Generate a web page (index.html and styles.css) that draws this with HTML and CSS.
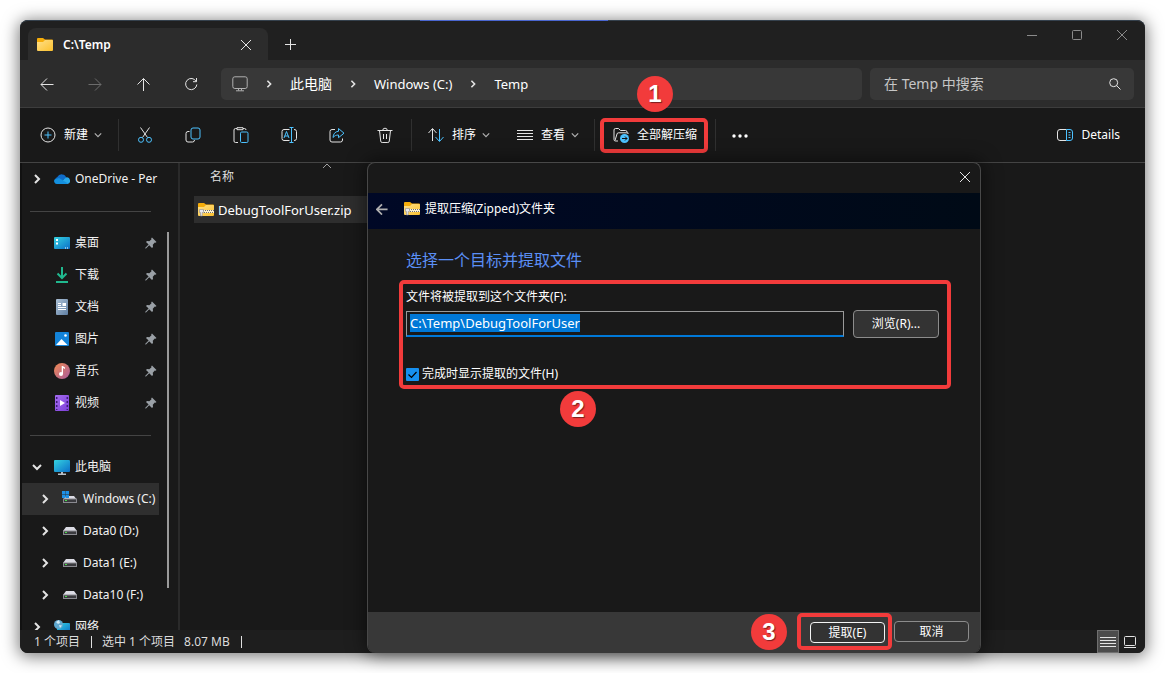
FILE: index.html
```html
<!DOCTYPE html>
<html lang="zh-CN">
<head>
<meta charset="utf-8">
<title>C:\Temp</title>
<link rel="stylesheet" href="styles.css">
</head>
<body>
<svg class="defs" aria-hidden="true">
  <defs>
    <linearGradient id="g-folder" x1="0" y1="0" x2="1" y2="1"><stop offset="0" stop-color="#ffe08a"/><stop offset="1" stop-color="#fbc02d"/></linearGradient>
    <linearGradient id="g-screen" x1="0" y1="0" x2="1" y2="1"><stop offset="0" stop-color="#35d3e0"/><stop offset="1" stop-color="#0b6fc9"/></linearGradient>
    <linearGradient id="g-doc" x1="0" y1="0" x2="1" y2="1"><stop offset="0" stop-color="#adc1d6"/><stop offset="1" stop-color="#5f7fa3"/></linearGradient>
    <linearGradient id="g-music" x1="0" y1="0" x2="1" y2="1"><stop offset="0" stop-color="#f08a52"/><stop offset="1" stop-color="#a85a9c"/></linearGradient>
    <linearGradient id="g-video" x1="0" y1="0" x2="1" y2="1"><stop offset="0" stop-color="#a56cf0"/><stop offset="1" stop-color="#7c3fd8"/></linearGradient>
  </defs>
  <symbol id="i-folder" viewBox="0 0 16 16"><path fill="#f5ac0a" d="M0 2a1 1 0 0 1 1-1h5l2 1.500h7a1 1 0 0 1 1 1v3H0z"/><path fill="url(#g-folder)" d="M0 5h6l2-2h7a1 1 0 0 1 1 1v9a1 1 0 0 1-1 1H1a1 1 0 0 1-1-1z"/></symbol>
  <symbol id="i-zip" viewBox="0 0 16 16"><path fill="#f5ac0a" d="M0 2a1 1 0 0 1 1-1h5l2 1.500h7a1 1 0 0 1 1 1v3H0z"/><path fill="url(#g-folder)" d="M0 5h6l2-2h7a1 1 0 0 1 1 1v9a1 1 0 0 1-1 1H1a1 1 0 0 1-1-1z"/><path stroke="#fff4cf" stroke-width="3" d="M5 9.500h11"/><path stroke="#6f6f78" stroke-dasharray="1 1" d="M5 8.500h11M6 10.500h10"/><path fill="#e8e8ee" stroke="#8d8d96" stroke-width=".6" d="M1.500 7.500h4v3h-1.300v3.500H2.500v-3.500h-1z"/></symbol>
  <symbol id="i-right" viewBox="0 0 10 10"><path d="M3 1l4 4-4 4"/></symbol>
  <symbol id="i-down" viewBox="0 0 10 10"><path d="M1 3l4 4 4-4"/></symbol>
  <symbol id="i-close" viewBox="0 0 10 10"><path d="M0 0l10 10M10 0L0 10"/></symbol>
  <symbol id="i-back" viewBox="0 0 14 14"><path d="M13.500 7.500H1M7 1.500l-6 6 6 6"/></symbol>
  <symbol id="i-pin" viewBox="0 0 12 12"><path fill="#9aa0a6" d="M7 .5L11.500 5l-1 .8-.7-.2-2 2.200.2 2.200-1 1L4.200 8.300 1 11.500H.3v-.8L3.600 7.600 1 5l1-1 2.300.2 2.200-2L6.200 1.300z"/></symbol>
  <symbol id="i-drive" viewBox="0 0 16 16"><path fill="#dcdce4" d="M4 4h8l3 4H1z"/><path fill="#8a8a90" d="M1 7.500h14V12H1z"/><path fill="#3a3a3e" d="M2 8.500h12V11H2z"/><path fill="#4be04b" d="M3 9h2v1H3z"/></symbol>
</svg>

<div class="window">
  <header class="titlebar">
    <div class="tab">
      <svg class="i16"><use href="#i-folder"/></svg>
      <span class="tab-name">C:\Temp</span>
      <button class="plain" aria-label="关闭标签页"><svg class="i10 line"><use href="#i-close"/></svg></button>
    </div>
    <button class="plain new-tab" aria-label="新标签页"><svg class="i11 line" viewBox="0 0 11 11"><path d="M5.500 0v11M0 5.500h11"/></svg></button>
    <div class="caption">
      <button class="plain" aria-label="最小化"><svg class="i10 line" viewBox="0 0 10 10"><path d="M0 5.500h10"/></svg></button>
      <button class="plain" aria-label="最大化"><svg class="i10 line" viewBox="0 0 10 10"><rect x=".5" y=".5" width="9" height="9" rx="1"/></svg></button>
      <button class="plain" aria-label="关闭"><svg class="i10 line"><use href="#i-close"/></svg></button>
    </div>
  </header>

  <nav class="navbar">
    <button class="plain nav-btn" aria-label="后退"><svg class="i14 line"><use href="#i-back"/></svg></button>
    <button class="plain nav-btn" aria-label="前进" disabled><svg class="i14 line" viewBox="0 0 14 14"><path d="M.5 7.500H13M7 1.500l6 6-6 6"/></svg></button>
    <button class="plain nav-btn" aria-label="上一级"><svg class="i14 line" viewBox="0 0 14 14"><path d="M7.500 14V1.500M1.500 7.500l6-6 6 6"/></svg></button>
    <button class="plain nav-btn" aria-label="刷新"><svg class="i14 line" viewBox="0 0 14 14"><path d="M12.200 4.500A5.600 5.600 0 1 0 12.800 7.500M12.500 1v3.700H9"/></svg></button>
    <div class="address">
      <svg class="i16 line muted" viewBox="0 0 16 16"><rect x=".8" y=".8" width="14.400" height="11.700" rx="2"/><path d="M6.500 12.500v2M9.500 12.500v2M4 14.800h8"/></svg>
      <svg class="i8 line"><use href="#i-right"/></svg>
      <a class="cjk" href="#pc">此电脑</a>
      <svg class="i8 line"><use href="#i-right"/></svg>
      <a href="#c">Windows (C:)</a>
      <svg class="i8 line"><use href="#i-right"/></svg>
      <a href="#temp">Temp</a>
    </div>
    <div class="search">
      <input type="search" aria-label="搜索" placeholder="在 Temp 中搜索">
      <svg class="i12 line" viewBox="0 0 12 12"><circle cx="4.700" cy="4.700" r="4"/><path d="M7.500 7.500L11.500 11.500"/></svg>
    </div>
  </nav>

  <div class="toolbar">
    <button class="tool first"><svg class="i16 line" viewBox="0 0 16 16"><circle cx="8" cy="8" r="7"/><path class="blue" d="M8 4.500v7M4.500 8h7"/></svg>新建<svg class="chev line"><use href="#i-down"/></svg></button>
    <span class="sep"></span>
    <div class="icon-tools">
      <button class="plain" aria-label="剪切"><svg class="i16 line" viewBox="0 0 16 16"><path d="M3.500.5l7 10M12.500.5l-7 10"/><circle class="blue" cx="4" cy="12.800" r="2.500"/><circle class="blue" cx="12" cy="12.800" r="2.500"/></svg></button>
      <button class="plain" aria-label="复制"><svg class="i16 line" viewBox="0 0 16 16"><path d="M4.500 4.500H3a2 2 0 0 0-2 2V13a2 2 0 0 0 2 2h4.500a2 2 0 0 0 2-2"/><rect class="blue" x="6" y="1" width="9" height="11" rx="2"/></svg></button>
      <button class="plain" aria-label="粘贴"><svg class="i16 line" viewBox="0 0 16 16"><path d="M5 15.500H2.500a1.500 1.500 0 0 1-1.500-1.500V3a1.500 1.500 0 0 1 1.500-1.500H4M10 1.500h1.500A1.500 1.500 0 0 1 13 3M4 .7h6v2H4z"/><rect class="blue" x="7.500" y="5" width="7.500" height="10.500" rx="1.200"/></svg></button>
      <button class="plain" aria-label="重命名"><svg class="i16 line" viewBox="0 0 16 16"><path d="M8.500 2.500H3a2 2 0 0 0-2 2v7a2 2 0 0 0 2 2h5.500M13 2.500a2.200 2.200 0 0 1 2.500 2v7a2.200 2.200 0 0 1-2.500 2"/><path class="blue" d="M8.500.5h4M8.500 15.500h4M10.500.5v15M3 11l2.500-6.500L8 11M3.700 9h3.600"/></svg></button>
      <button class="plain" aria-label="共享"><svg class="i16 line" viewBox="0 0 16 16"><path d="M6 2.500H3a2 2 0 0 0-2 2V13a2 2 0 0 0 2 2h8.500a2 2 0 0 0 2-2v-1.500"/><path class="blue" d="M9.500 1.500l5.500 4.700-5.500 4.500V8C7 8 5.500 8.800 4 10.500 4.300 7 6 4.500 9.500 4.300z"/></svg></button>
      <button class="plain" aria-label="删除"><svg class="i16 line" viewBox="0 0 16 16"><path d="M.5 3.500h15M2.500 3.500L3.700 14a1.500 1.500 0 0 0 1.500 1.500h5.600a1.500 1.500 0 0 0 1.500-1.500l1.200-10.500M5.700 3.500a2.300 2.300 0 0 1 4.600 0M6.500 7v5M9.500 7v5"/></svg></button>
    </div>
    <span class="sep"></span>
    <button class="tool sort"><svg class="i16 line" viewBox="0 0 16 16"><path d="M4.500 14V2M.5 6l4-4.500 4 4.500"/><path class="blue" d="M11.500 2v12M7.500 10l4 4.500 4-4.500"/></svg>排序<svg class="chev line"><use href="#i-down"/></svg></button>
    <button class="tool view"><svg class="i16 line" viewBox="0 0 16 16"><path d="M0 3.500h16M0 6.500h16M0 9.500h16M0 12.500h16"/></svg>查看<svg class="chev line"><use href="#i-down"/></svg></button>
    <span class="sep"></span>
    <div class="callout callout-tool">
      <button class="tool"><svg class="i16 line" viewBox="0 0 16 16"><path d="M5 14H2.500A1.500 1.500 0 0 1 1 12.500V3a1.500 1.500 0 0 1 1.500-1.500h3l2 2h5A1.500 1.500 0 0 1 14 5M2 13.500L4 7a1.500 1.500 0 0 1 1.500-1.200H15V7"/><circle cx="11.500" cy="11.500" r="4.500" fill="#4cc2ff" stroke="none"/><path stroke="#111" d="M9 11.500h5M12 9.500l2 2-2 2"/></svg>全部解压缩</button>
      <span class="step step-1">1</span>
    </div>
    <span class="sep"></span>
    <button class="plain more" aria-label="更多"><svg class="i16" viewBox="0 0 16 16" fill="#fff"><circle cx="2" cy="9" r="1.700"/><circle cx="8" cy="9" r="1.700"/><circle cx="14" cy="9" r="1.700"/></svg></button>
    <button class="tool details"><svg class="i16 line" viewBox="0 0 16 16"><path d="M9.500 2.500H3a2.500 2.500 0 0 0-2.500 2.500v6A2.500 2.500 0 0 0 3 13.500h6.500"/><path class="blue" d="M9.500 2.500H13A2.500 2.500 0 0 1 15.500 5v6a2.500 2.500 0 0 1-2.500 2.500H9.500zM11.500 5.500h2M11.500 8h2M11.500 10.500h2"/></svg>Details</button>
  </div>

  <div class="content">
    <aside class="sidebar">
      <div class="tree">
        <a class="node" href="#onedrive"><svg class="exp line"><use href="#i-right"/></svg><svg class="i16" viewBox="0 0 16 16"><path fill="#0f6cc9" d="M3 12.500A3.500 3.500 0 0 1 3.300 6 5 5 0 0 1 12.500 7z"/><path fill="#28a8ea" d="M4.500 13L12 6.500a3.300 3.300 0 0 1 1.500 6.500z"/><path fill="#1490df" d="M3 13a3 3 0 0 1-2.500-4.500L5 7l9 5.500-1 .5z"/></svg><span>OneDrive - Per</span></a>
        <hr>
        <a class="node" href="#desktop"><i class="exp"></i><svg class="i16" viewBox="0 0 16 16"><rect y="2" width="16" height="12" rx="1" fill="url(#g-screen)"/><path fill="#fff" d="M2 4h2v2H2zM2 7.500h2v2H2zM11 12.500h1v1h-1zM13 12.500h1v1h-1z"/></svg><span>桌面</span><svg class="pin"><use href="#i-pin"/></svg></a>
        <a class="node" href="#downloads"><i class="exp"></i><svg class="i16" viewBox="0 0 16 16"><path fill="none" stroke="#20b88e" stroke-width="2" d="M8 0v11M3.500 6.500L8 11l4.500-4.500M2 15h12"/></svg><span>下载</span><svg class="pin"><use href="#i-pin"/></svg></a>
        <a class="node" href="#documents"><i class="exp"></i><svg class="i16" viewBox="0 0 16 16"><rect x="2" width="12" height="16" rx="1" fill="url(#g-doc)"/><path stroke="#fff" fill="none" d="M4 4.500h3M4 6.500h3M4 8.500h8M4 10.500h8"/><path fill="#fff" d="M8.500 4H12v3H8.500z"/></svg><span>文档</span><svg class="pin"><use href="#i-pin"/></svg></a>
        <a class="node" href="#pictures"><i class="exp"></i><svg class="i16" viewBox="0 0 16 16"><rect x="1" y="1" width="14" height="14" rx="1" fill="#1383d8"/><path fill="#fff" d="M2 14l5.500-6 6 6z"/><circle cx="11.500" cy="4.500" r="1.300" fill="#fff"/></svg><span>图片</span><svg class="pin"><use href="#i-pin"/></svg></a>
        <a class="node" href="#music"><i class="exp"></i><svg class="i16" viewBox="0 0 16 16"><circle cx="8" cy="8" r="8" fill="url(#g-music)"/><circle cx="7" cy="11" r="2" fill="#fff"/><path fill="#fff" d="M7.700 3h1l2.300 1.500V6L9 5v6H7.700z"/></svg><span>音乐</span><svg class="pin"><use href="#i-pin"/></svg></a>
        <a class="node" href="#videos"><i class="exp"></i><svg class="i16" viewBox="0 0 16 16"><rect x="1" width="14" height="16" rx="1" fill="url(#g-video)"/><path stroke="#3d1c78" stroke-width="1.500" stroke-dasharray="2 2" d="M2.700 2v13M13.300 2v13"/><path fill="#fff" d="M6 5l5 3-5 3z"/></svg><span>视频</span><svg class="pin"><use href="#i-pin"/></svg></a>
        <hr>
        <a class="node" href="#pc"><svg class="exp line"><use href="#i-down"/></svg><svg class="i16" viewBox="0 0 16 16"><rect y="1" width="16" height="12" rx="1" fill="url(#g-screen)"/><path fill="#b8c0c8" d="M7 13h2v1.500h3V16H4v-1.500h3z"/></svg><span>此电脑</span></a>
        <a class="node child current" href="#c"><svg class="exp line"><use href="#i-right"/></svg><svg class="i16" viewBox="0 0 16 16"><path fill="#dcdce4" d="M4 5h8l3 4H1z"/><path fill="#8a8a90" d="M1 7.500h14V12H1z"/><path fill="#3a3a3e" d="M2 8.500h12V11H2z"/><path fill="#4be04b" d="M3 9h2v1H3z"/><path fill="#1e90e8" d="M0 0h3.300v3.300H0zM3.700 0H7v3.300H3.700zM0 3.700h3.300V7H0zM3.700 3.700H7V7H3.700z"/></svg><span>Windows (C:)</span></a>
        <a class="node child" href="#d"><svg class="exp line"><use href="#i-right"/></svg><svg class="i16"><use href="#i-drive"/></svg><span>Data0 (D:)</span></a>
        <a class="node child" href="#e"><svg class="exp line"><use href="#i-right"/></svg><svg class="i16"><use href="#i-drive"/></svg><span>Data1 (E:)</span></a>
        <a class="node child" href="#f"><svg class="exp line"><use href="#i-right"/></svg><svg class="i16"><use href="#i-drive"/></svg><span>Data10 (F:)</span></a>
        <a class="node" href="#network"><svg class="exp line"><use href="#i-right"/></svg><svg class="i16" viewBox="0 0 16 16"><rect x="3" y="4" width="13" height="10" rx="1" fill="url(#g-screen)"/><circle cx="4.500" cy="5.500" r="4.500" fill="#5fa8cf"/><path fill="#cfe8f4" d="M2 3l3-2 1 3-2 1zM5 6l3 .5-2 2.500z"/></svg><span>网络</span></a>
      </div>
      <div class="scrollbar"></div>
    </aside>
    <main class="files">
      <svg class="sort-mark line" viewBox="0 0 10 6"><path d="M1 5l4-4 4 4"/></svg>
      <div class="col-head">名称</div>
      <div class="file"><svg class="i16"><use href="#i-zip"/></svg>DebugToolForUser.zip</div>
    </main>
  </div>

  <footer class="status">
    <span>1 个项目</span><i class="bar"></i><span>选中 1 个项目</span><span class="size">8.07 MB</span><i class="bar"></i>
    <button class="plain mode on" aria-label="详细信息视图"><svg class="i16 line" viewBox="0 0 16 16"><path d="M0 3.500h16M0 6.500h16M0 9.500h16M0 12.500h16"/></svg></button>
    <button class="plain mode" aria-label="缩略图视图"><svg class="i12 line" viewBox="0 0 12 12"><rect x=".5" y=".5" width="11" height="9" rx="1"/><path d="M0 11.500h12"/></svg></button>
  </footer>

  <section class="dialog" role="dialog" aria-label="提取压缩文件夹">
    <div class="dlg-top"><button class="plain" aria-label="关闭"><svg class="i10 line"><use href="#i-close"/></svg></button></div>
    <div class="dlg-title">
      <button class="plain" aria-label="返回"><svg class="i12 line muted arrow"><use href="#i-back"/></svg></button>
      <svg class="i16"><use href="#i-zip"/></svg>
      <span>提取压缩(Zipped)文件夹</span>
    </div>
    <div class="dlg-body">
      <h1>选择一个目标并提取文件</h1>
      <div class="callout callout-form">
        <label for="dest">文件将被提取到这个文件夹(F):</label>
        <div class="dest-row">
          <input id="dest" type="text" value="C:\Temp\DebugToolForUser" spellcheck="false">
          <button class="btn browse">浏览(R)...</button>
        </div>
        <div class="check"><input id="show" type="checkbox" checked><label for="show">完成时显示提取的文件(H)</label></div>
        <span class="step step-2">2</span>
      </div>
    </div>
    <div class="dlg-foot">
      <span class="step">3</span>
      <div class="callout callout-ok"><button class="btn primary">提取(E)</button></div>
      <button class="btn">取消</button>
    </div>
  </section>
</div>
<script src="app.js"></script>
</body>
</html>
```
FILE: styles.css
```css
* { box-sizing: border-box; }

body {
  margin: 0;
  padding: 20px;
  height: 100vh;
  background: #fff;
  color: #fff;
  font: 12px/16px "Noto Sans", "Noto Sans CJK SC", sans-serif;
  overflow: hidden;
}

a { color: inherit; text-decoration: none; }
button, input { font: inherit; color: inherit; }
svg { flex: none; display: block; }

.defs { position: absolute; width: 0; height: 0; }
.i8 { width: 8px; height: 8px; }
.i10 { width: 10px; height: 10px; }
.i11 { width: 11px; height: 11px; }
.i12 { width: 12px; height: 12px; }
.i14 { width: 14px; height: 14px; }
.i16 { width: 16px; height: 16px; }
.line { fill: none; stroke: #e4e4e4; overflow: visible; }
.blue { stroke: #4cc2ff; }
.muted { stroke: #b0b0b0; }
.arrow { stroke-width: 2; }
.i8.line, .exp.line { stroke-width: 2; }
.chev { width: 8px; height: 8px; margin-left: -2px; }
.chev.line { stroke: #b0b0b0; stroke-width: 1.5; }

.plain {
  display: flex;
  align-items: center;
  justify-content: center;
  padding: 0;
  border: 0;
  background: none;
}

.window {
  position: relative;
  display: flex;
  flex-direction: column;
  height: 100%;
  border-radius: 8px;
  background: #191919;
  box-shadow: 0 2px 16px 2px rgba(0, 0, 0, .5);
}

/* Title bar */
.titlebar {
  display: flex;
  height: 40px;
  border-top: 1px solid #35414d;
  border-radius: 8px 8px 0 0;
  padding-left: 8px;
  background: #202020;
}
.titlebar::before {
  content: "";
  position: absolute;
  top: 0;
  left: 400px;
  width: 188px;
  height: 1px;
  background: #4a66d0;
}
.tab {
  display: flex;
  align-items: center;
  gap: 10px;
  width: 240px;
  margin-top: 7px;
  padding: 1px 17px 0 9px;
  border-radius: 8px 8px 0 0;
  background: #2c2c2c;
}
.tab-name { flex: 1; font-weight: 600; }
.new-tab { width: 45px; padding-top: 8px; }
.caption { display: flex; margin-left: auto; gap: 35px; padding: 0 18px 11px 0; }
.caption .line { stroke: #8b8b8b; }

/* Navigation */
.navbar {
  display: flex;
  align-items: center;
  gap: 8px;
  height: 48px;
  padding: 0 11px 0 3px;
  border-bottom: 1px solid #3d3d3d;
  background: #2c2c2c;
  font-size: 13px;
}
.nav-btn { width: 48px; height: 32px; margin-right: -8px; }
.nav-btn:disabled .line { stroke: #6c6c6c; }
.address, .search {
  display: flex;
  align-items: center;
  height: 32px;
  border-radius: 5px;
  background: #383838;
}
.address { flex: 1; gap: 17px; margin-left: 6px; padding-left: 11px; }
.cjk { font-size: 14px; }
.search { width: 264px; padding: 0 13px 0 14px; }
.search input { flex: 1; min-width: 0; padding: 0; border: 0; outline: 0; background: none; font-size: 14px; }
.search input::placeholder { color: #c6c6c6; opacity: 1; }

/* Command bar */
.toolbar {
  display: flex;
  align-items: center;
  height: 55px;
  border-bottom: 1px solid #444;
}
.tool {
  display: flex;
  align-items: center;
  gap: 8px;
  padding: 0;
  border: 0;
  background: none;
  white-space: nowrap;
}
.first { padding: 0 16px 0 20px; }
.icon-tools { display: flex; padding: 0 2px; }
.icon-tools button { width: 48px; height: 32px; }
.sep { width: 1px; height: 32px; background: #303030; }
.sort { padding: 0 27px 0 16px; }
.view { padding-right: 15px; }
.more { padding-left: 16px; }
.details { margin-left: auto; padding-right: 25px; }

/* Walk-through marks */
.callout { position: relative; border: 4px solid #f23b3b; border-radius: 5px; }
.callout-tool { height: 35px; display: flex; margin: 0 7px 0 5px; padding: 0 7px 0 9px; }
.callout-form { margin: 9px 29px 0 31px; padding: 5px 8px 3px 3px; }
.callout-ok { padding: 5px 3px 3px 9px; }
.step {
  flex: none;
  width: 36px;
  height: 36px;
  border-radius: 50%;
  background: #f23b3b;
  font: bold 24px/36px "Liberation Sans", sans-serif;
  text-align: center;
  text-shadow: 1px 1px 1px rgba(0, 0, 0, .5);
}
.step-1 { position: absolute; left: 33px; bottom: 37px; }
.step-2 { position: absolute; left: 157px; top: calc(100% + 6px); }

/* Content */
.content { display: flex; flex: 1; min-height: 0; overflow: hidden; }
.sidebar {
  display: flex;
  width: 160px;
  border-left: 2px solid #111;
  border-right: 2px solid #2a2a2a;
}
.tree { width: 137px; overflow: hidden; }
.tree hr { height: 1px; margin: 16px 8px 15px; border: 0; background: #444; }
.node {
  display: flex;
  align-items: center;
  height: 32px;
  padding: 0 2px 0 10px;
  white-space: nowrap;
  color: #f2f2f2;
}
.node.child { padding: 0 0 0 18px; }
.node.current { background: #2f2f2f; }
.node span { flex: 1; margin-left: 5px; }
.exp { flex: none; width: 10px; height: 10px; margin-right: 12px; }
.pin { width: 12px; height: 12px; }
.scrollbar { width: 2px; margin: 69px 0 42px 8px; background: #9a9a9a; }

.files { flex: 1; padding: 0 14px; }
.sort-mark { width: 10px; height: 6px; margin-left: 128px; stroke: #a0a0a0; }
.col-head { padding: 0 16px; line-height: 16px; color: #dedede; }
.file {
  display: flex;
  align-items: center;
  gap: 4px;
  width: 280px;
  height: 27px;
  margin-top: 11px;
  padding-left: 4px;
  background: #2e2e2e;
  font-size: 13px;
}

.status {
  display: flex;
  align-items: center;
  height: 23px;
  padding: 0 9px 0 14px;
  border-radius: 0 0 8px 8px;
  background: #1e1e1e;
  color: #dcdcdc;
}
.bar { width: 1px; height: 12px; margin: 0 10px 0 11px; background: #e0e0e0; }
.size { margin-left: 9px; }
.mode { height: 23px; }
.mode.on { width: 22px; margin: 0 5px 0 auto; border: 1px solid #707070; background: #4c4c4c; }

/* Extraction dialog */
.dialog {
  position: absolute;
  inset: 142px 164px 0 347px;
  display: flex;
  flex-direction: column;
  overflow: hidden;
  border: 1px solid #484848;
  border-bottom: 0;
  border-radius: 8px;
  background: #191919;
  box-shadow: 0 0 18px 2px rgba(0, 0, 0, .5);
}
.dlg-top { display: flex; justify-content: flex-end; height: 30px; padding: 0 10px 2px; }
.dlg-title {
  display: flex;
  align-items: center;
  height: 36px;
  padding: 0 8px 4px;
  background: linear-gradient(90deg, #000826, #000a16);
}
.dlg-title span { margin-left: 5px; }
.dlg-title button { margin-right: 16px; }
.dlg-body { flex: 1; padding-top: 20px; }
.dlg-body h1 { margin: 0 0 0 38px; font-size: 16px; line-height: 22px; font-weight: 400; color: #5b8ff5; }
.callout-form > label { display: block; }
.dest-row { display: flex; align-items: center; gap: 9px; margin: 5px 0 28px; }
#dest {
  flex: 1;
  min-width: 0;
  height: 26px;
  padding: 0 3px 2px;
  border: 1px solid #9a9a9a;
  border-bottom: 2px solid #0078d7;
  outline: 0;
  background: #191919;
  font-size: 13px;
}
#dest::selection { background: #0078d7; color: #fff; }
.btn {
  width: 75px;
  height: 21px;
  padding: 0;
  border: 1px solid #8c8c8c;
  border-radius: 4px;
  background: #333;
  display: block;
}
.browse { width: 86px; height: 28px; }
.primary { border-color: #f4f4f4; }
.check { display: flex; align-items: center; gap: 3px; }
.check input {
  appearance: none;
  width: 13px;
  height: 13px;
  margin: 0;
  border-radius: 1px;
  background: #1690f0 url('data:image/svg+xml,<svg xmlns="http://www.w3.org/2000/svg" viewBox="0 0 13 13"><path d="M2.500 6.500l3 3 5-5.500" fill="none" stroke="black" stroke-width="1.200"/></svg>');
}
.dlg-foot {
  display: flex;
  align-items: center;
  justify-content: flex-end;
  gap: 2px;
  height: 41px;
  padding: 0 11px 2px;
  background: #383838;
}
.dlg-foot .step { margin-right: 8px; }
```
FILE: app.js
```js
const dest = document.getElementById("dest");
dest.focus();
dest.select();
```
